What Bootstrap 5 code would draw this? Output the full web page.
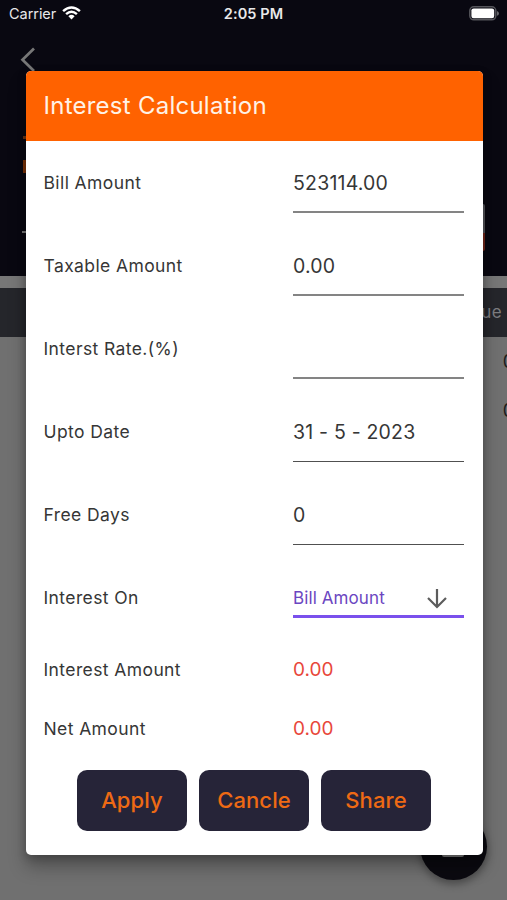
<!DOCTYPE html>
<html lang="en">
<head>
<meta charset="utf-8">
<meta name="viewport" content="width=device-width, initial-scale=1">
<title>Interest Calculation</title>
<link href="https://cdn.jsdelivr.net/npm/bootstrap@5.3.0/dist/css/bootstrap.min.css" rel="stylesheet">
<style>
  body { font-family: Inter, "Liberation Sans", sans-serif; background: #707070; color: #363636; }
  .screen { width: 507px; height: 900px; }
  .top-area { height: 276px; background: #090811; }
  .status { height: 28px; padding: 0 8px 0 9px; color: #e8e8ea; font-size: 14.5px; line-height: 28px; }
  .carrier { letter-spacing: -.05px; }
  .status-time { font-weight: 600; font-size: 14.5px; letter-spacing: .1px; }
  .battery { margin-top: -2px; }
  .wifi { margin: -2px 0 0 2px; }
  .back-icon { margin: 19px 0 0 20px; }
  .table-gap { height: 12px; background: #777; }
  .table-head { height: 49px; background: #25262b; color: #7d7d80; font-size: 17px; padding: 1px 5px 0 0; letter-spacing: .4px; }
  .table-cell { height: 49px; margin-right: -7px; color: #1c1c1c; font-size: 18px; }
  .peek { position: absolute; }
  .peek-a { left: 23px; top: 136px; width: 4px; height: 3px; background: #70340f; }
  .peek-b { left: 23px; top: 160px; width: 4px; height: 13px; background: #7d3407; }
  .peek-c { left: 22px; top: 231px; width: 5px; height: 2px; background: #777; }
  .peek-d { left: 480px; top: 204px; width: 5px; height: 47px; background: linear-gradient(#55555a 0 62%, #75281b 62%); border-radius: 0 2px 2px 0; }
  .fab { position: absolute; left: 420px; top: 813px; width: 67px; height: 67px; background: #0b0a10; box-shadow: 0 4px 8px rgba(0,0,0,.35); }
  .fab-bar { position: absolute; left: 22px; bottom: 23px; width: 22px; height: 8px; background: #858585; border-radius: 2px; }
  .dialog-box { position: absolute; left: 25.5px; top: 70.5px; width: 457px; height: 784px; border-radius: 5px; box-shadow: 0 12px 18px rgba(0,0,0,.28), 0 3px 10px rgba(0,0,0,.22); }
  .dialog-head { height: 70.5px; padding: 1px 18px 0; background: #ff6200; color: #fff2e6; font-size: 24px; letter-spacing: .25px; }
  .dialog-main { padding: 13px 18px 0; }
  .field { height: 59px; margin-bottom: 24px; font-size: 17.5px; letter-spacing: .4px; }
  .field > :first-child { width: 249.5px; padding-bottom: 1px; }
  .field-value { height: 59px; padding-top: 3px; border-bottom: 2px solid #848484; font-size: 19.5px; letter-spacing: .2px; margin-right: .5px; }
  .field-value.thin { padding-top: 2px; border-bottom: 1px solid #505050; }
  .field-pick { height: 40px; margin-top: 33px; }
  .field > .pick-label { padding-bottom: 0; }
  .field-pick .field-value { height: 40px; padding-top: 4px; border-bottom: 3px solid #7a50ec; color: #6b46c1; font-size: 17px; letter-spacing: .1px; padding-right: 15px; }
  .field-total { height: 58.5px; margin: 0; padding-bottom: 1px; }
  .total { color: #e8473b; font-size: 19px; letter-spacing: 0; padding-bottom: 1px; }
  .actions { gap: 12px; margin-top: 10.5px; }
  .act { width: 110px; height: 61px; border-radius: 10px; background: #262438; color: #ee6a14; font-size: 22px; font-weight: 500; letter-spacing: .1px; padding: 0; border: 0; }
  .act:hover { background: #302d47; color: #ee6a14; }
</style>
</head>
<body>
<div class="screen position-relative overflow-hidden">
  <div class="top-area">
    <div class="status d-flex align-items-center justify-content-between position-relative">
      <div class="d-flex align-items-center gap-1">
        <span class="carrier">Carrier</span>
        <svg class="wifi" width="19" height="14" viewBox="0 0 19 14" fill="none" stroke="#fff" stroke-width="2.5"><path d="M1.1 5.1Q9.5-2.2 17.9 5.1M4.1 8.1Q9.5 3.4 14.9 8.1"/><path d="M6.4 10.2Q9.5 7.4 12.6 10.2L9.5 13.4Z" fill="#fff" stroke="none"/></svg>
      </div>
      <span class="status-time position-absolute start-50 translate-middle-x">2:05 PM</span>
      <svg class="battery" width="30" height="15" viewBox="0 0 30 15"><rect x=".8" y=".8" width="26" height="13" rx="4" fill="none" stroke="#55555b" stroke-width="1.5"/><rect x="2.4" y="2.4" width="22.8" height="9.8" rx="2.2" fill="#fff"/><path d="M28 5q2 .8 2 2.4T28 9.8Z" fill="#68686d"/></svg>
    </div>
    <svg class="back-icon d-block" width="16" height="26" viewBox="0 0 16 26" fill="none" stroke="#777" stroke-width="2.7"><path d="M14 1.5 2.5 12.7 14 24"/></svg>
  </div>
  <div class="table-gap"></div>
  <div class="table-head d-flex align-items-center justify-content-end">Due</div>
  <div class="table-cell d-flex align-items-center justify-content-end">0</div>
  <div class="table-cell d-flex align-items-center justify-content-end">0</div>

  <div class="peek peek-a"></div>
  <div class="peek peek-b"></div>
  <div class="peek peek-c"></div>
  <div class="peek peek-d"></div>
  <div class="fab rounded-circle"><span class="fab-bar"></span></div>

  <div class="dialog-box bg-white overflow-hidden" role="dialog" aria-label="Interest Calculation">
    <div class="dialog-head d-flex align-items-center"><span>Interest Calculation</span></div>
    <div class="dialog-main">
      <div class="field d-flex align-items-center"><span>Bill Amount</span><div class="field-value flex-grow-1 d-flex align-items-center">523114.00</div></div>
      <div class="field d-flex align-items-center"><span>Taxable Amount</span><div class="field-value flex-grow-1 d-flex align-items-center">0.00</div></div>
      <div class="field d-flex align-items-center"><span>Interst Rate.(%)</span><div class="field-value flex-grow-1 d-flex align-items-center"></div></div>
      <div class="field d-flex align-items-center"><span>Upto Date</span><div class="field-value thin flex-grow-1 d-flex align-items-center">31 - 5 - 2023</div></div>
      <div class="field mb-0 d-flex align-items-center"><span>Free Days</span><div class="field-value thin flex-grow-1 d-flex align-items-center">0</div></div>
      <div class="field field-pick d-flex align-items-center mb-4"><span class="pick-label">Interest On</span>
        <div class="field-value flex-grow-1 d-flex align-items-center justify-content-between">Bill Amount
          <svg width="24" height="24" viewBox="0 0 24 24" fill="none" stroke="#5c5c5c" stroke-width="2.2"><path d="M12 2V19.5M3 11 12 20 21 11"/></svg>
        </div>
      </div>
      <div class="field field-total d-flex align-items-center"><span>Interest Amount</span><span class="total">0.00</span></div>
      <div class="field field-total d-flex align-items-center"><span>Net Amount</span><span class="total">0.00</span></div>
      <div class="d-flex justify-content-center actions">
        <button type="button" class="btn act">Apply</button>
        <button type="button" class="btn act">Cancle</button>
        <button type="button" class="btn act">Share</button>
      </div>
    </div>
  </div>
</div>
<script src="https://cdn.jsdelivr.net/npm/bootstrap@5.3.0/dist/js/bootstrap.bundle.min.js"></script>
</body>
</html>
